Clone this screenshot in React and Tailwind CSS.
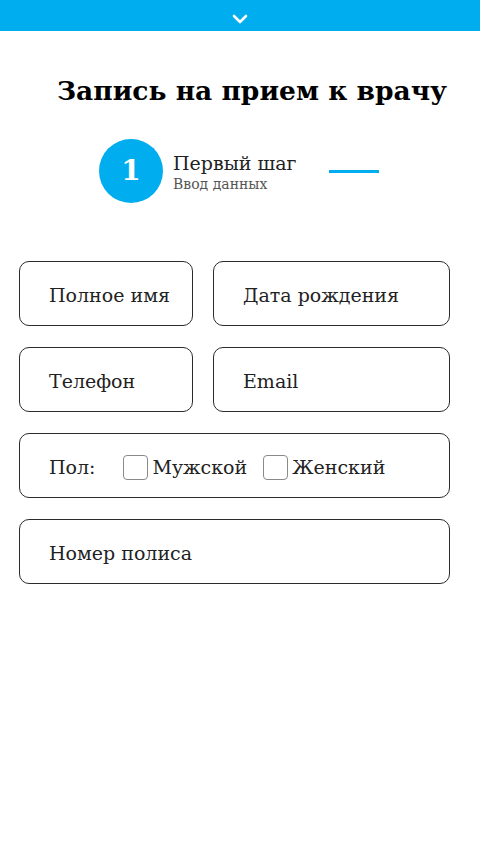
import React from "react";

const font = { fontFamily: '"DejaVu Serif", "Liberation Serif", serif' };

function Field({ children, className = "" }) {
  return (
    <div
      className={`h-[65px] border border-[#2b2b2b] rounded-[10px] flex items-center pl-[29px] pt-[3px] text-[19px] text-[#222] ${className}`}
    >
      {children}
    </div>
  );
}

function Check({ label }) {
  return (
    <div className="flex items-center">
      <div className="w-[25px] h-[25px] border border-[#8a8a8a] rounded-[4px] bg-white" />
      <span className="ml-[4px]">{label}</span>
    </div>
  );
}

export default function App() {
  return (
    <div className="w-[480px] h-[852px] bg-white" style={font}>
      <div className="h-[31px] bg-[#00aeef] flex justify-center items-start pt-[14px]">
        <svg width="16" height="10" viewBox="0 0 16 10">
          <path d="M2 2 L8 8 L14 2" stroke="white" strokeWidth="2.6" fill="none" strokeLinecap="round" strokeLinejoin="round" />
        </svg>
      </div>

      <h1 className="mt-[42px] pl-[57px] text-[26.5px] leading-[36px] font-bold text-black whitespace-nowrap">
        Запись на прием к врачу
      </h1>

      <div className="mt-[30px] pl-[99px] flex items-center">
        <div className="w-[64px] h-[64px] rounded-full bg-[#00aeef] flex items-center justify-center text-white text-[28px] font-bold">
          1
        </div>
        <div className="ml-[10px] w-[126px] pt-[2px] flex flex-col">
          <span className="text-[19px] leading-[24px] text-[#222]">Первый шаг</span>
          <span className="text-[14px] leading-[18px] text-[#555]">Ввод данных</span>
        </div>
        <div className="ml-[30px] w-[50px] h-[3px] bg-[#00aeef]" />
      </div>

      <div className="mt-[58px] pl-[19px] w-[450px] flex flex-col gap-[21px]">
        <div className="flex gap-[20px]">
          <Field className="w-[174px]">Полное имя</Field>
          <Field className="w-[237px]">Дата рождения</Field>
        </div>
        <div className="flex gap-[20px]">
          <Field className="w-[174px]">Телефон</Field>
          <Field className="w-[237px]">Email</Field>
        </div>
        <Field className="w-[431px]">
          <span className="mr-[28px]">Пол:</span>
          <Check label="Мужской" />
          <div className="w-[16px]" />
          <Check label="Женский" />
        </Field>
        <Field className="w-[431px]">Номер полиса</Field>
      </div>
    </div>
  );
}
